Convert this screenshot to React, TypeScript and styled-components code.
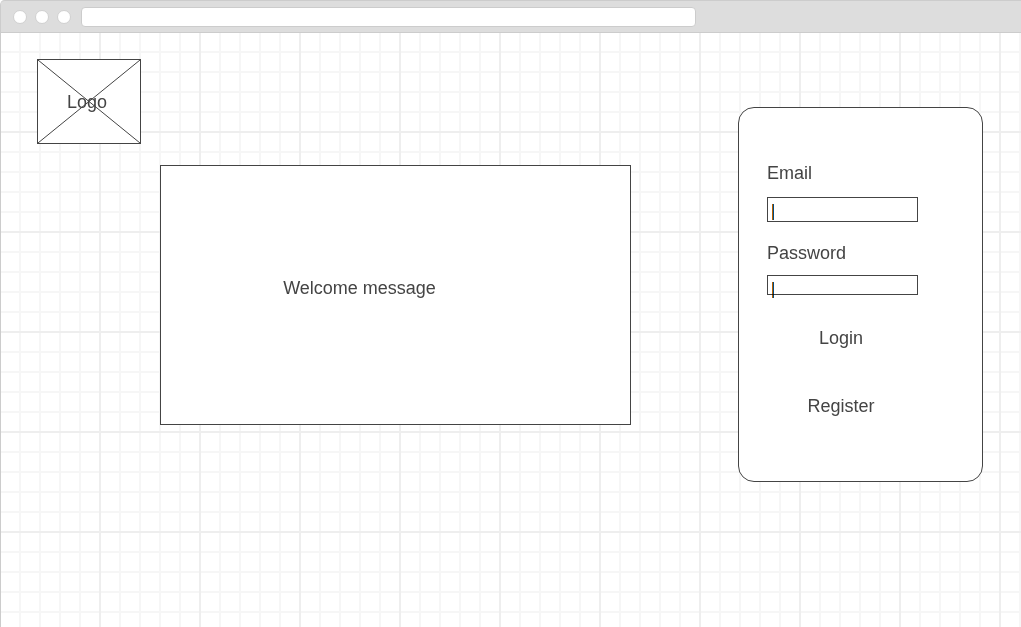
import React from "react";
import styled, { createGlobalStyle } from "styled-components";

const INK = "#444444";
const CHROME = "#dddddd";
const CHROME_LINE = "#cccccc";

const GlobalStyle = createGlobalStyle`
  *, *::before, *::after { box-sizing: border-box; }
  body {
    margin: 0;
    background: #ffffff;
    color: ${INK};
    font-family: "Liberation Sans", Arial, sans-serif;
    font-size: 18px;
    line-height: 20px;
  }
`;

const BrowserWindow = styled.div`
  display: flex;
  flex-direction: column;
  min-height: 100vh;
  border-left: 1px solid ${CHROME_LINE};
  border-top-left-radius: 5px;
`;

const BrowserBar = styled.header`
  display: flex;
  align-items: center;
  gap: 10px;
  height: 33px;
  padding-left: 12px;
  background: ${CHROME};
  border-top: 1px solid ${CHROME_LINE};
  border-bottom: 1px solid ${CHROME_LINE};
  border-top-left-radius: 4px;
`;

const WindowDots = styled.div`
  display: flex;
  gap: 8px;
`;

const Dot = styled.span`
  width: 14px;
  height: 14px;
  border: 1px solid #d0d0d0;
  border-radius: 50%;
  background: #ffffff;
`;

const AddressBar = styled.input`
  flex: 0 1 615px;
  min-width: 0;
  height: 20px;
  padding: 0 6px;
  border: 1px solid ${CHROME_LINE};
  border-radius: 4px;
  background: #ffffff;
  font: inherit;
  outline: none;
`;

const minorLine = "transparent 18px, #f6f6f6 18px, #f6f6f6 20px";
const majorLine = "transparent 98px, #eeeeee 98px, #eeeeee 100px";

const Canvas = styled.main`
  flex: 1;
  display: flex;
  align-items: flex-start;
  padding: 26px 38px 40px 36px;
  background-color: #ffffff;
  background-image:
    linear-gradient(to right, ${majorLine}),
    linear-gradient(to bottom, ${majorLine}),
    linear-gradient(to right, ${minorLine}),
    linear-gradient(to bottom, ${minorLine});
  background-size: 100px 100px, 100px 100px, 20px 20px, 20px 20px;
`;

const Logo = styled.div`
  flex: none;
  display: grid;
  place-items: center;
  width: 104px;
  height: 85px;
  border: 1px solid ${INK};
  background: #ffffff;

  > * { grid-area: 1 / 1; }
`;

const LogoCross = styled.svg`
  width: 100%;
  height: 100%;
  stroke: ${INK};
  stroke-width: 1;
`;

const LogoText = styled.span`
  padding-right: 4px;
`;

const Welcome = styled.section`
  flex: 1;
  display: flex;
  align-items: center;
  justify-content: center;
  min-height: 260px;
  margin: 106px 107px 0 19px;
  padding: 0 72px 14px 0;
  border: 1px solid ${INK};
  background: #ffffff;
`;

const Message = styled.p`
  margin: 0;
`;

const LoginCard = styled.form`
  flex: none;
  display: flex;
  flex-direction: column;
  width: 245px;
  min-height: 375px;
  margin-top: 48px;
  padding: 55px 64px 62px 28px;
  border: 1px solid ${INK};
  border-radius: 16px;
  background: #ffffff;
`;

const Label = styled.label`
  margin-bottom: 14px;
`;

const Field = styled.div<{ $height: number }>`
  position: relative;
  height: ${(p) => p.$height}px;

  & + label { margin-top: 21px; margin-bottom: 12px; }
`;

const TextBox = styled.input`
  display: block;
  width: 100%;
  height: 100%;
  padding: 0 8px;
  border: 1px solid ${INK};
  border-radius: 0;
  background: #ffffff;
  color: ${INK};
  font: inherit;
  outline: none;
`;

const Caret = styled.span`
  position: absolute;
  top: 7px;
  left: 5px;
  height: 16px;
  border-left: 1px solid #b75f00;
  border-right: 1px solid #004a80;
  mix-blend-mode: multiply;
  pointer-events: none;
`;

const Actions = styled.div`
  display: flex;
  flex-direction: column;
  align-items: center;
  gap: 48px;
  margin-top: 33px;
  padding-right: 3px;
`;

const ActionButton = styled.button`
  padding: 0;
  border: 0;
  background: none;
  color: inherit;
  font: inherit;
  cursor: pointer;
`;

export default function App() {
  return (
    <>
      <GlobalStyle />
      <BrowserWindow>
        <BrowserBar>
          <WindowDots>
            <Dot />
            <Dot />
            <Dot />
          </WindowDots>
          <AddressBar type="text" aria-label="Address" />
        </BrowserBar>
        <Canvas>
          <Logo>
            <LogoCross viewBox="0 0 102 83" preserveAspectRatio="none" aria-hidden="true">
              <path d="M0 0L102 83M102 0L0 83" />
            </LogoCross>
            <LogoText>Logo</LogoText>
          </Logo>
          <Welcome>
            <Message>Welcome message</Message>
          </Welcome>
          <LoginCard onSubmit={(e: React.FormEvent) => e.preventDefault()}>
            <Label htmlFor="email">Email</Label>
            <Field $height={25}>
              <TextBox id="email" type="email" />
              <Caret />
            </Field>
            <Label htmlFor="password">Password</Label>
            <Field $height={20}>
              <TextBox id="password" type="password" />
              <Caret />
            </Field>
            <Actions>
              <ActionButton type="submit">Login</ActionButton>
              <ActionButton type="button">Register</ActionButton>
            </Actions>
          </LoginCard>
        </Canvas>
      </BrowserWindow>
    </>
  );
}
